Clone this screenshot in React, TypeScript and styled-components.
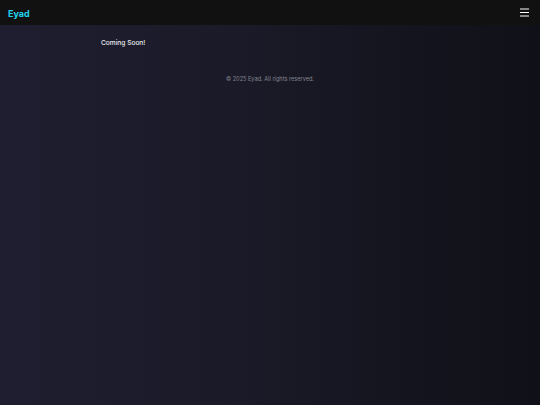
import styled, { createGlobalStyle } from "styled-components";

const GlobalStyle = createGlobalStyle`
  html, body {
    margin: 0;
    padding: 0;
  }
  body {
    font-family: Inter, "Noto Sans", sans-serif;
    background: #111118;
    color: #fff;
  }
`;

const Page = styled.div`
  display: flex;
  flex-direction: column;
  min-height: 405px;
  background: linear-gradient(90deg, #1e1e30 0%, #1a1a28 45%, #101018 100%);
`;

const Header = styled.header`
  display: flex;
  align-items: center;
  justify-content: space-between;
  height: 25px;
  padding: 0 11px 0 8px;
  background: #111111;
`;

const Logo = styled.span`
  font-size: 9px;
  font-weight: 700;
  color: #22d3ee;
  padding-top: 1px;
`;

const MenuButton = styled.button`
  display: flex;
  background: none;
  border: none;
  color: #fff;
  padding: 0;
`;

const Main = styled.main`
  padding: 14px 0 0 101px;
`;

const Title = styled.p`
  margin: 0;
  font-size: 6.6px;
  font-weight: 500;
  color: #ececf0;
`;

const Footer = styled.footer`
  text-align: center;
  padding-top: 29px;
  font-size: 5.6px;
  color: #85858f;
`;

export default function App() {
  return (
    <>
      <GlobalStyle />
      <Page>
        <Header>
          <Logo>Eyad</Logo>
          <MenuButton aria-label="menu">
            <svg width="9" height="9" viewBox="0 0 9 9">
              <path d="M0 1h9M0 4.5h9M0 8h9" stroke="currentColor" strokeWidth="1" />
            </svg>
          </MenuButton>
        </Header>
        <Main>
          <Title>Coming Soon!</Title>
        </Main>
        <Footer>© 2025 Eyad. All rights reserved.</Footer>
      </Page>
    </>
  );
}
